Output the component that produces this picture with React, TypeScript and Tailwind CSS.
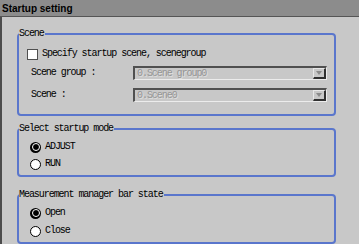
import React from 'react';

const mono = "font-['Liberation_Mono',monospace] text-[10px] tracking-[-1.05px] leading-[12px]";

function Radio({ checked, label }: { checked?: boolean; label: string }) {
  return (
    <div className="flex items-center gap-[4px] h-[12px] pl-[11px]">
      {checked ? (
        <span className="w-[11px] h-[11px] rounded-full bg-black flex items-center justify-center">
          <span className="w-[8px] h-[8px] rounded-full bg-black border border-white" />
        </span>
      ) : (
        <span className="w-[11px] h-[11px] rounded-full bg-white border border-black" />
      )}
      <span className={`${mono} text-black`}>{label}</span>
    </div>
  );
}

function Dropdown({ value }: { value: string }) {
  return (
    <div className="ml-auto w-[194px] h-[14px] flex border-t-2 border-l-2 border-[#505050] border-b border-b-[#ececec] border-r border-r-[#ececec]">
      <span className={`${mono} flex-1 pl-[2px] text-[#959595] [text-shadow:1px_1px_0_#dedede]`}>{value}</span>
      <span className="w-[13px] h-full flex items-center justify-center border-r-2 border-b-2 border-[#303030] border-t border-l border-t-[#e8e8e8] border-l-[#e8e8e8]">
        <svg width="6" height="4" viewBox="0 0 6 4">
          <path d="M0 0H6L3 4Z" fill="#8a8a8a" />
        </svg>
      </span>
    </div>
  );
}

function Group({ title, className, children }: { title: string; className?: string; children: React.ReactNode }) {
  return (
    <fieldset className={`ml-[15px] w-[319px] border-2 border-[#5a76cc] rounded-[4px] px-0 ${className ?? ''}`}>
      <legend className={`${mono} text-black px-0 pr-[1px]`}>{title}</legend>
      {children}
    </fieldset>
  );
}

export default function App() {
  return (
    <div className="w-[359px] h-[244px] bg-[#c8c8c8] flex flex-col overflow-hidden">
      <div className="h-[17px] shrink-0 bg-[#8c8c8c] border-b border-[#555] flex items-center pl-[2px]">
        <span className="font-['Liberation_Sans',sans-serif] font-bold text-[10px] text-black">Startup setting</span>
      </div>
      <div className="flex-1 border-l-2 border-[#4c4c4c] flex flex-col">
        <Group title="Scene" className="mt-[11px] pt-[8px] pb-[12px]">
          <div className="flex items-center gap-[4px] h-[12px] pl-[8px]">
            <span className="w-[11px] h-[11px] bg-white border border-[#505050]" />
            <span className={`${mono} text-black`}>Specify startup scene, scenegroup</span>
          </div>
          <div className="flex items-center mt-[6px] pl-[12px] pr-[7px]">
            <span className={`${mono} text-black`}>Scene group :</span>
            <Dropdown value="0.Scene group0" />
          </div>
          <div className="flex items-center mt-[8px] pl-[12px] pr-[7px]">
            <span className={`${mono} text-black`}>Scene :</span>
            <Dropdown value="0.Scene0" />
          </div>
        </Group>
        <Group title="Select startup mode" className="mt-[7px] pt-[6px] pb-[5px]">
          <div className="flex flex-col gap-[5px]">
            <Radio checked label="ADJUST" />
            <Radio label="RUN" />
          </div>
        </Group>
        <Group title="Measurement manager bar state" className="mt-[12px] pt-[6px] pb-[5px]">
          <div className="flex flex-col gap-[6px]">
            <Radio checked label="Open" />
            <Radio label="Close" />
          </div>
        </Group>
      </div>
    </div>
  );
}
